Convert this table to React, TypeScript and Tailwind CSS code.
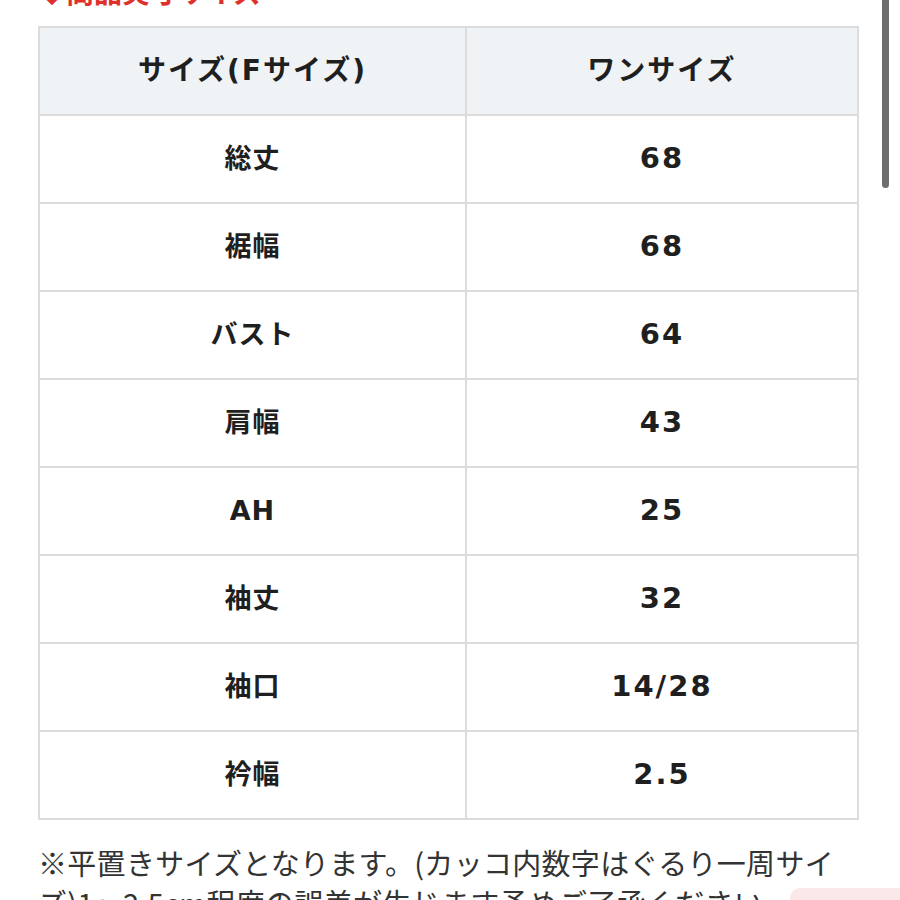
import React from "react";

const rows: [string, string][] = [
  ["総丈", "68"],
  ["裾幅", "68"],
  ["バスト", "64"],
  ["肩幅", "43"],
  ["AH", "25"],
  ["袖丈", "32"],
  ["袖口", "14/28"],
  ["衿幅", "2.5"],
];

const font = { fontFamily: '"DejaVu Sans", "Noto Sans CJK JP", sans-serif' };

export default function App() {
  return (
    <div className="relative w-[900px] h-[900px] overflow-hidden bg-white" style={font}>
      <div className="pl-[38px]">
        <div className="h-[6px] overflow-hidden relative">
          <div className="absolute left-0 bottom-0 leading-[30px] text-[28px] font-bold text-[#e0302c] whitespace-nowrap" style={{ fontFamily: '"Noto Sans CJK JP", sans-serif' }}>
            ◆商品実寸サイズ
          </div>
        </div>
        <div className="h-[20px]" />
        <table className="w-[821px] border-collapse text-[#1f1f1f]">
          <colgroup>
            <col className="w-[428px]" />
            <col className="w-[393px]" />
          </colgroup>
          <thead>
            <tr className="h-[88px] bg-[#eff3f5]">
              <th className="border-2 border-[#dcdcdc] text-[28px] font-bold tracking-[2px]">サイズ(Fサイズ)</th>
              <th className="border-2 border-[#dcdcdc] text-[28px] font-bold tracking-[2px]">ワンサイズ</th>
            </tr>
          </thead>
          <tbody>
            {rows.map(([k, v]) => (
              <tr key={k} className="h-[88px]">
                <td className="border-2 border-[#dcdcdc] text-center text-[27px] font-bold tracking-[1px]">{k}</td>
                <td className="border-2 border-[#dcdcdc] text-center text-[29px] font-bold tracking-[2px]">{v}</td>
              </tr>
            ))}
          </tbody>
        </table>
        <div className="mt-[22px] text-[#333333] text-[29px] leading-[40px] tracking-[0.3px] whitespace-nowrap" style={{ fontFamily: '"Noto Sans CJK JP", sans-serif' }}>
          <div>※平置きサイズとなります。(カッコ内数字はぐるり一周サイ</div>
          <div>ズ)1～2.5cm程度の誤差が生じます予めご了承ください。</div>
        </div>
      </div>
      <div className="absolute left-[882px] top-0 w-[7px] h-[188px] rounded-b-full bg-[#6e6e6e]" />
      <div className="absolute left-[790px] top-[888px] w-[120px] h-[30px] rounded-[10px] bg-[#fbe9ea]" />
    </div>
  );
}
